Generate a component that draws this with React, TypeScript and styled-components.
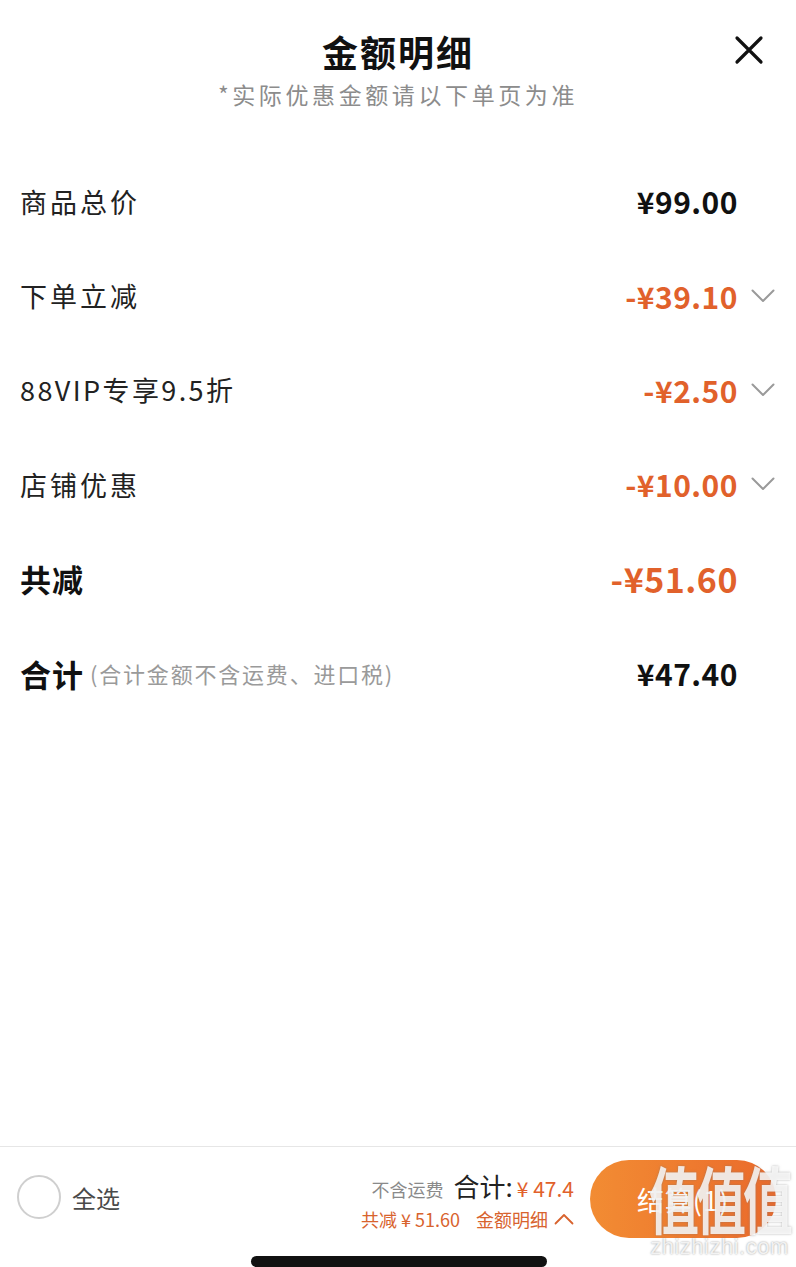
import React from "react";
import styled, { createGlobalStyle } from "styled-components";

const GlobalStyle = createGlobalStyle`
  html, body {
    margin: 0;
    padding: 0;
    background: #fff;
  }
  body {
    font-family: "Noto Sans CJK SC", "Noto Sans", sans-serif;
    color: #1a1a1a;
  }
`;

const Page = styled.div`
  position: relative;
  width: 796px;
  height: 1267px;
  display: flex;
  flex-direction: column;
  background: #fff;
  overflow: hidden;
`;

const Header = styled.header`
  position: relative;
  padding-top: 29px;
  text-align: center;
`;

const Title = styled.h1`
  margin: 0;
  font-size: 36px;
  line-height: 44px;
  font-weight: 700;
  letter-spacing: 2px;
  color: #111;
`;

const Subtitle = styled.p`
  margin: 5px 0 0;
  font-size: 23px;
  line-height: 32px;
  letter-spacing: 3.6px;
  color: #8c8c8c;
`;

const CloseButton = styled.button`
  position: absolute;
  top: 34px;
  right: 31px;
  width: 32px;
  height: 32px;
  padding: 0;
  border: 0;
  background: none;
  display: flex;
  align-items: center;
  justify-content: center;
`;

const List = styled.div`
  flex: 1;
  padding-top: 44px;
`;

const Row = styled.div`
  height: 94.4px;
  display: flex;
  align-items: center;
  padding-left: 20px;
  padding-right: 21px;
`;

const Label = styled.span<{ $bold?: boolean; $tight?: boolean }>`
  font-size: ${(p) => (p.$bold ? "31px" : "27px")};
  font-weight: ${(p) => (p.$bold ? 700 : 400)};
  letter-spacing: ${(p) => (p.$bold ? "1px" : p.$tight ? "2.4px" : "3px")};
  color: ${(p) => (p.$bold ? "#111" : "#222")};
`;

const Note = styled.span`
  margin-left: 6px;
  font-size: 22px;
  letter-spacing: 1.8px;
  color: #9a9a9a;
`;

const Value = styled.span<{ $orange?: boolean; $big?: boolean }>`
  margin-left: auto;
  font-size: ${(p) => (p.$big ? "34px" : "30px")};
  font-weight: 700;
  letter-spacing: 0.5px;
  color: ${(p) => (p.$orange ? "#e1612b" : "#111")};
`;

const ChevronSlot = styled.span`
  width: 37px;
  display: flex;
  justify-content: flex-end;
  align-items: center;
`;

const BottomBar = styled.footer`
  border-top: 1px solid #e6e6e6;
  padding: 13px 20px 0 17px;
  display: flex;
  flex-direction: column;
`;

const BarRow = styled.div`
  height: 78px;
  display: flex;
  align-items: center;
`;

const Radio = styled.span`
  width: 40px;
  height: 40px;
  margin-top: -4px;
  border-radius: 50%;
  border: 2px solid #cfcfcf;
`;

const SelectAll = styled.span`
  margin-left: 11px;
  margin-top: -4px;
  font-size: 24px;
  color: #4a4a4a;
`;

const Summary = styled.div`
  margin-left: auto;
  margin-right: 16px;
  display: flex;
  flex-direction: column;
  align-items: flex-end;
  gap: 2px;
`;

const SummaryLine = styled.div`
  display: flex;
  align-items: baseline;
  white-space: nowrap;
`;

const Small = styled.span<{ $color: string; $size: number; $gap?: number }>`
  font-size: ${(p) => p.$size}px;
  color: ${(p) => p.$color};
  margin-left: ${(p) => p.$gap ?? 0}px;
`;

const SummaryLink = styled.span`
  margin-left: 16px;
  display: flex;
  align-items: center;
  gap: 6px;
  font-size: 18px;
  color: #d8632e;
`;

const PayButton = styled.button`
  width: 186px;
  height: 78px;
  border-radius: 39px;
  border: 0;
  background: linear-gradient(90deg, #f28c33 0%, #ee7a2f 55%, #ea6a2c 100%);
  color: #fff;
  font-family: inherit;
  font-size: 27px;
  letter-spacing: 1px;
`;

const HomeIndicator = styled.div`
  align-self: center;
  margin: 18px 0 0 4px;
  width: 296px;
  height: 11px;
  border-radius: 6px;
  background: #111;
`;

const Watermark = styled.div`
  position: absolute;
  right: 6px;
  bottom: 8px;
  display: flex;
  flex-direction: column;
  align-items: center;
  color: rgba(255, 255, 255, 0.82);
  pointer-events: none;
`;

const WatermarkMark = styled.span`
  font-size: 50px;
  font-weight: 700;
  line-height: 78px;
  letter-spacing: -3px;
  transform: scaleY(1.45);
  text-shadow: 0 0 2px rgba(120, 120, 120, 0.6);
`;

const WatermarkSite = styled.span`
  font-family: "Liberation Sans", sans-serif;
  font-size: 22px;
  line-height: 24px;
  letter-spacing: 0.5px;
  text-shadow: 0 0 2px rgba(120, 120, 120, 0.8);
`;

const ChevronDown = () => (
  <svg width="24" height="14" viewBox="0 0 24 14" fill="none">
    <path d="M1.5 1.5 L12 12 L22.5 1.5" stroke="#9a9a9a" strokeWidth="2" strokeLinecap="round" strokeLinejoin="round" />
  </svg>
);

const ChevronUp = () => (
  <svg width="20" height="12" viewBox="0 0 20 12" fill="none">
    <path d="M1.5 10.5 L10 2 L18.5 10.5" stroke="#d8632e" strokeWidth="1.8" strokeLinecap="round" strokeLinejoin="round" />
  </svg>
);

const CloseIcon = () => (
  <svg width="30" height="30" viewBox="0 0 30 30" fill="none">
    <path d="M3 3 L27 27 M27 3 L3 27" stroke="#111" strokeWidth="3.2" strokeLinecap="round" />
  </svg>
);

type Item = {
  label: string;
  value: string;
  orange?: boolean;
  expandable?: boolean;
  tight?: boolean;
};

const items: Item[] = [
  { label: "商品总价", value: "¥99.00" },
  { label: "下单立减", value: "-¥39.10", orange: true, expandable: true },
  { label: "88VIP专享9.5折", value: "-¥2.50", orange: true, expandable: true, tight: true },
  { label: "店铺优惠", value: "-¥10.00", orange: true, expandable: true },
];

const App = () => {
  return (
    <Page>
      <GlobalStyle />
      <Header>
        <Title>金额明细</Title>
        <Subtitle>*实际优惠金额请以下单页为准</Subtitle>
        <CloseButton aria-label="关闭">
          <CloseIcon />
        </CloseButton>
      </Header>

      <List>
        {items.map((item) => (
          <Row key={item.label}>
            <Label $tight={item.tight}>{item.label}</Label>
            <Value $orange={item.orange}>{item.value}</Value>
            <ChevronSlot>{item.expandable && <ChevronDown />}</ChevronSlot>
          </Row>
        ))}
        <Row>
          <Label $bold>共减</Label>
          <Value $orange $big>-¥51.60</Value>
          <ChevronSlot />
        </Row>
        <Row>
          <Label $bold>合计</Label>
          <Note>(合计金额不含运费、进口税)</Note>
          <Value>¥47.40</Value>
          <ChevronSlot />
        </Row>
      </List>

      <BottomBar>
        <BarRow>
          <Radio />
          <SelectAll>全选</SelectAll>
          <Summary>
            <SummaryLine>
              <Small $color="#8a8a8a" $size={18}>不含运费</Small>
              <Small $color="#222" $size={26} $gap={10}>合计:</Small>
              <Small $color="#e1612b" $size={21} $gap={4}>¥ 47.4</Small>
            </SummaryLine>
            <SummaryLine>
              <Small $color="#d8632e" $size={18}>共减 ¥ 51.60</Small>
              <SummaryLink>
                金额明细
                <ChevronUp />
              </SummaryLink>
            </SummaryLine>
          </Summary>
          <PayButton>结算(1)</PayButton>
        </BarRow>
        <HomeIndicator />
      </BottomBar>

      <Watermark>
        <WatermarkMark>值值值</WatermarkMark>
        <WatermarkSite>zhizhizhi.com</WatermarkSite>
      </Watermark>
    </Page>
  );
};

export default App;
